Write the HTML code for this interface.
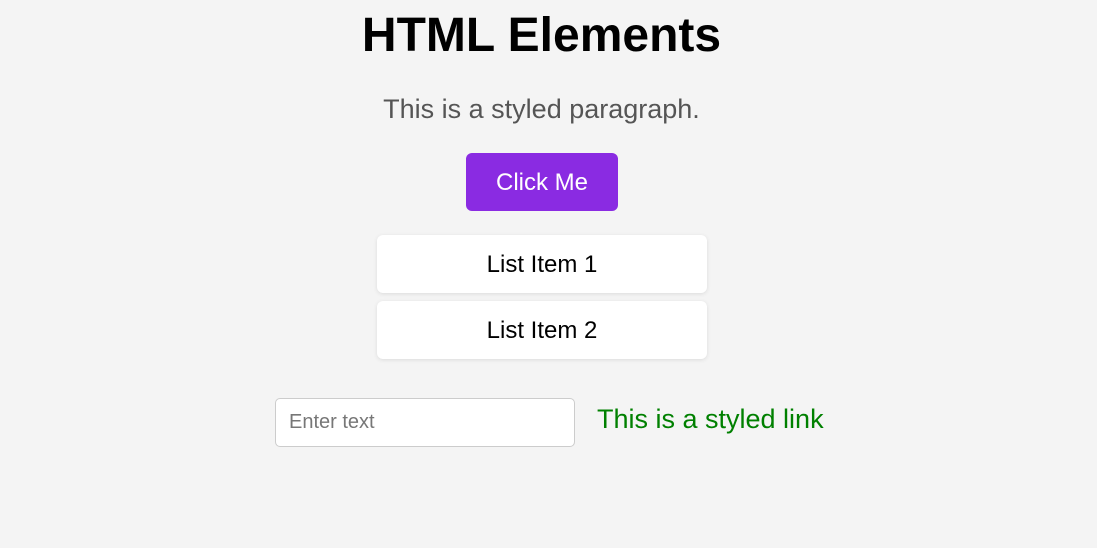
<!DOCTYPE html>
<html><head><style>
body{margin:0;width:1097px;height:548px;background:#f4f4f4;font-family:"Liberation Sans",Arial,sans-serif;position:relative;overflow:hidden}
.a{position:absolute;white-space:nowrap}
h1{position:absolute;margin:0;left:0;width:1083px;text-align:center;top:8px;font-size:48px;line-height:56px;font-weight:bold;color:#000}
.p{left:0;width:1083px;text-align:center;top:93px;font-size:27px;line-height:32px;color:#555}
.btn{left:466px;top:153px;width:152px;height:58px;background:#8a2be2;border-radius:6px;color:#fff;font-size:24px;line-height:60px;text-align:center}
.li{left:377px;width:330px;height:58px;background:#fff;border-radius:6px;box-shadow:0 1px 4px rgba(0,0,0,.1);font-size:24px;line-height:60px;text-align:center;color:#000}
.in{left:275px;top:398px;width:298px;height:47px;background:#fff;border:1px solid #ccc;border-radius:5px;font-size:20px;line-height:47px;color:#777;text-indent:13px}
.lk{left:597px;top:403px;font-size:27px;line-height:32px;color:#008000}
</style></head><body>
<h1>HTML Elements</h1>
<div class="a p">This is a styled paragraph.</div>
<div class="a btn">Click Me</div>
<div class="a li" style="top:235px">List Item 1</div>
<div class="a li" style="top:301px">List Item 2</div>
<div class="a in">Enter text</div>
<div class="a lk">This is a styled link</div>
</body></html>
